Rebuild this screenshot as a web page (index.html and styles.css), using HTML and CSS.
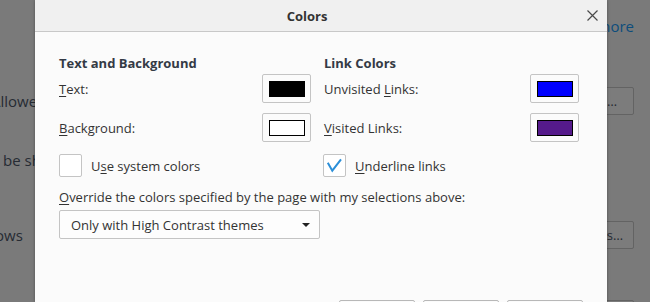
FILE: index.html
```html
<!DOCTYPE html>
<html>
<head>
    <title>Colors</title>
    <link rel="stylesheet" href="styles.css">
</head>
<body>
    <div class="page">
        <div class="page-row row-top">
            <span></span>
            <a class="page-link">Learn more</a>
        </div>
        <div class="page-row row-fonts">
            <span class="page-text indent-a">Allowed fonts</span>
            <span class="page-btn wide">Advanced…</span>
        </div>
        <div class="page-row row-shown">
            <span class="page-text indent-b">be shown here</span>
            <span></span>
        </div>
        <div class="page-row row-colors">
            <span class="page-text indent-c">Windows</span>
            <span class="page-btn">Colors…</span>
        </div>
        <div class="page-row row-last">
            <span></span>
            <span class="page-btn"></span>
        </div>
    </div>

    <div class="dialog">
        <div class="dialog-title">
            <span>Colors</span>
            <svg class="close" width="11" height="11" viewBox="0 0 11 11">
                <path d="M0.5 0.5 L10.5 10.5 M10.5 0.5 L0.5 10.5" stroke="#4a4a4a" stroke-width="1.2" fill="none"/>
            </svg>
        </div>
        <div class="dialog-body">
            <div class="columns">
                <div class="heading">Text and Background</div>
                <div class="heading">Link Colors</div>

                <div class="color-row first">
                    <span><u>T</u>ext:</span>
                    <span class="swatch-btn"><span class="swatch black"></span></span>
                </div>
                <div class="color-row first">
                    <span>Unvisited <u>L</u>inks:</span>
                    <span class="swatch-btn"><span class="swatch blue"></span></span>
                </div>

                <div class="color-row">
                    <span><u>B</u>ackground:</span>
                    <span class="swatch-btn"><span class="swatch white"></span></span>
                </div>
                <div class="color-row">
                    <span><u>V</u>isited Links:</span>
                    <span class="swatch-btn"><span class="swatch purple"></span></span>
                </div>

                <div class="check-row">
                    <span class="checkbox"></span>
                    <span>U<u>s</u>e system colors</span>
                </div>
                <div class="check-row right">
                    <span class="checkbox">
                        <svg width="21" height="21" viewBox="0 0 21 21">
                            <polyline points="3.8,7.8 8.3,15.7 17,4.3" stroke="#2b8fd8" stroke-width="2" fill="none"/>
                        </svg>
                    </span>
                    <span><u>U</u>nderline links</span>
                </div>
            </div>

            <div class="override"><u>O</u>verride the colors specified by the page with my selections above:</div>
            <div class="select">
                <span>Only with High Contrast themes</span>
                <span class="arrow"></span>
            </div>

            <div class="footer">
                <span class="btn"></span>
                <span class="btn"></span>
                <span class="btn"></span>
            </div>
        </div>
    </div>
</body>
</html>
```

FILE: styles.css
```css
body{
    margin: 0;
    height: 302px;
    overflow: hidden;
    position: relative;
    background-color: #7a7a7a;
    font-family: "Open Sans", "DejaVu Sans", sans-serif;
    font-size: 13px;
    color: #333;
}

/* page behind the dialog */
.page{
    display: flex;
    flex-direction: column;
    height: 302px;
    overflow: hidden;
    padding-right: 16px;
    color: #262b33;
}
.page-row{
    display: flex;
    flex-shrink: 0;
    justify-content: space-between;
    align-items: center;
}
.row-top{
    height: 52px;
}
.row-fonts{
    height: 28px;
    margin-top: 35px;
}
.row-shown{
    height: 28px;
    margin-top: 31px;
}
.row-colors{
    height: 27px;
    margin-top: 47px;
}
.row-last{
    height: 28px;
    margin-top: 52px;
    align-items: flex-start;
}
.page-link{
    color: #0d4d7c;
    font-size: 15px;
}
.page-text{
    font-size: 15px;
}
.indent-a{
    margin-left: -9px;
}
.indent-b{
    margin-left: 3px;
}
.indent-c{
    margin-left: -41px;
}
.page-btn{
    display: flex;
    align-items: center;
    justify-content: flex-end;
    height: 26px;
    min-width: 90px;
    padding: 0 10px 0 8px;
    border: 1px solid #636363;
    border-radius: 2px;
    background-color: #7c7c7c;
}
.page-btn.wide{
    padding-right: 16px;
}
.row-last .page-btn{
    width: 100px;
    padding: 0;
}

/* dialog */
.dialog{
    position: absolute;
    top: 0;
    left: 35px;
    width: 572px;
    height: 302px;
    overflow: hidden;
    background-color: #fbfbfb;
    box-shadow: 0 0 3px rgba(0,0,0,0.35);
}
.dialog-title{
    position: relative;
    height: 31px;
    display: flex;
    align-items: center;
    justify-content: center;
    padding-right: 28px;
    background-color: #f0f0f0;
    border-bottom: 1px solid #c8c8c8;
    font-weight: bold;
    color: #333;
}
.close{
    position: absolute;
    right: 9px;
    top: 10px;
}
.dialog-body{
    padding: 22px 28px 0 24px;
}
.columns{
    display: grid;
    grid-template-columns: 252px 255px;
    column-gap: 13px;
}
.heading{
    font-weight: bold;
    line-height: 18px;
    color: #343a45;
}
.color-row{
    display: flex;
    justify-content: space-between;
    align-items: center;
    height: 29px;
    margin-top: 10px;
}
.color-row.first{
    margin-top: 2px;
}
.swatch-btn{
    box-sizing: border-box;
    width: 49px;
    height: 29px;
    padding: 6px;
    border: 1px solid #c4c4c4;
    border-radius: 2px;
    background-color: #fbfbfb;
}
.swatch{
    display: block;
    box-sizing: border-box;
    width: 36px;
    height: 16px;
    border: 1px solid #000;
}
.black{
    background-color: #000;
}
.white{
    background-color: #fff;
}
.blue{
    background-color: #0000ff;
}
.purple{
    background-color: #551a8b;
}
.check-row{
    display: flex;
    align-items: center;
    gap: 9px;
    height: 23px;
    margin-top: 12px;
}
.check-row.right{
    margin-left: -1px;
}
.checkbox{
    box-sizing: border-box;
    width: 23px;
    height: 23px;
    border: 1px solid #c4c4c4;
    border-radius: 2px;
    background-color: #fff;
}
.checkbox svg{
    display: block;
}
.override{
    margin-top: 11px;
    line-height: 18px;
}
.select{
    box-sizing: border-box;
    width: 261px;
    height: 29px;
    margin-top: 4px;
    padding: 0 9px 0 11px;
    display: flex;
    justify-content: space-between;
    align-items: center;
    border: 1px solid #c4c4c4;
    border-radius: 2px;
    background-color: #fdfdfd;
}
.arrow{
    width: 0;
    height: 0;
    border-left: 4px solid transparent;
    border-right: 4px solid transparent;
    border-top: 4px solid #222;
}
.footer{
    display: flex;
    justify-content: flex-end;
    gap: 8px;
    margin-top: 61px;
    margin-right: -4px;
}
.btn{
    box-sizing: border-box;
    width: 76px;
    height: 28px;
    border: 1px solid #b8b8b8;
    border-radius: 2px;
    background-color: #fbfbfb;
}
u{
    text-decoration-thickness: 1px;
    text-underline-offset: 2px;
}
```
